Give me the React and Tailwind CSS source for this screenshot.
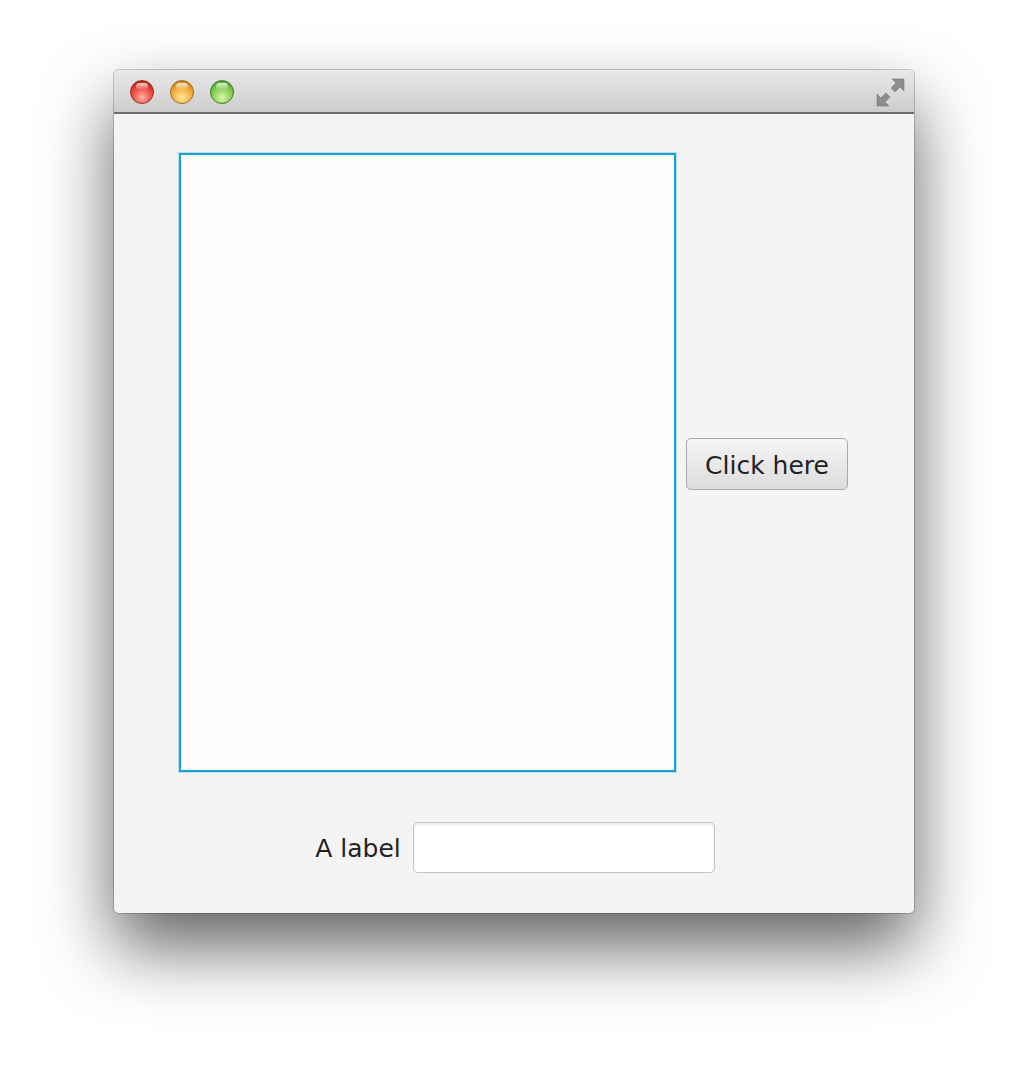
import React from 'react';

const Light = ({ color }) => {
    const styles = {
        red: 'bg-[radial-gradient(circle_at_50%_75%,#ffb0a8_0%,#f05548_45%,#c8231b_80%,#8e1410_100%)] border-[#9a2a22]',
        yellow: 'bg-[radial-gradient(circle_at_50%_75%,#ffe5a0_0%,#f5b445_45%,#d5861b_80%,#9a5a10_100%)] border-[#a06a20]',
        green: 'bg-[radial-gradient(circle_at_50%_75%,#d8f6b0_0%,#8fd35a_45%,#55a630_80%,#2f6e18_100%)] border-[#3f7a28]',
    };
    return (
        <div className={`relative w-[24px] h-[24px] rounded-full border ${styles[color]}`}>
            <div className="absolute left-[5px] top-[2px] w-[12px] h-[7px] rounded-full bg-gradient-to-b from-white/80 to-white/0" />
        </div>
    );
};

const ResizeIcon = () => (
    <svg width="30" height="30" viewBox="0 0 30 30">
        <polygon points="28,1 28,13 24,9 19,14 15,10 20,5 16,1" fill="#8c8c8c" stroke="#7a7a7a" strokeWidth="0.6" />
        <polygon points="1,28 1,16 5,20 10,15 14,19 9,24 13,28" fill="#8c8c8c" stroke="#7a7a7a" strokeWidth="0.6" />
    </svg>
);

export default function App() {
    return (
        <div className="min-h-[1072px] bg-white pt-[70px] pl-[114px] font-['DejaVu_Sans',sans-serif]">
            <div className="w-[800px] rounded-[5px] shadow-[0_34px_70px_rgba(0,0,0,0.62),0_0_0_1px_rgba(0,0,0,0.2)] overflow-hidden">
                {/* title bar */}
                <div className="relative h-[44px] flex items-center gap-[16px] pl-[16px] pt-[1px] bg-gradient-to-b from-[#e9e9e9] to-[#cdcdcd] border-b-2 border-[#707070]">
                    <Light color="red" />
                    <Light color="yellow" />
                    <Light color="green" />
                    <div className="absolute right-[8px] top-[8px]">
                        <ResizeIcon />
                    </div>
                </div>

                {/* content */}
                <div className="h-[799px] bg-[#f4f4f4] pt-[39px]">
                    <div className="flex items-center pl-[65px]">
                        <div className="w-[497px] h-[619px] bg-[#fdfdfd] border-2 border-[#1a9fd5] shadow-[0_0_0_1px_#b8e2f3]" />
                        <button className="ml-[10px] mt-[2px] w-[162px] h-[52px] rounded-[5px] border border-[#a9a9a9] bg-gradient-to-b from-[#f6f6f6] to-[#dcdcdc] text-[25px] text-[#222] leading-none pt-[3px]">
                            Click here
                        </button>
                    </div>

                    <div className="mt-[50px] flex items-center justify-center gap-[12px] pl-[2px]">
                        <span className="text-[25px] text-[#222] leading-none pt-[2px]">A label</span>
                        <div className="w-[302px] h-[51px] rounded-[5px] border border-[#c2c2c2] bg-white shadow-[inset_0_2px_3px_rgba(0,0,0,0.08)]" />
                    </div>
                </div>
            </div>
        </div>
    );
}
